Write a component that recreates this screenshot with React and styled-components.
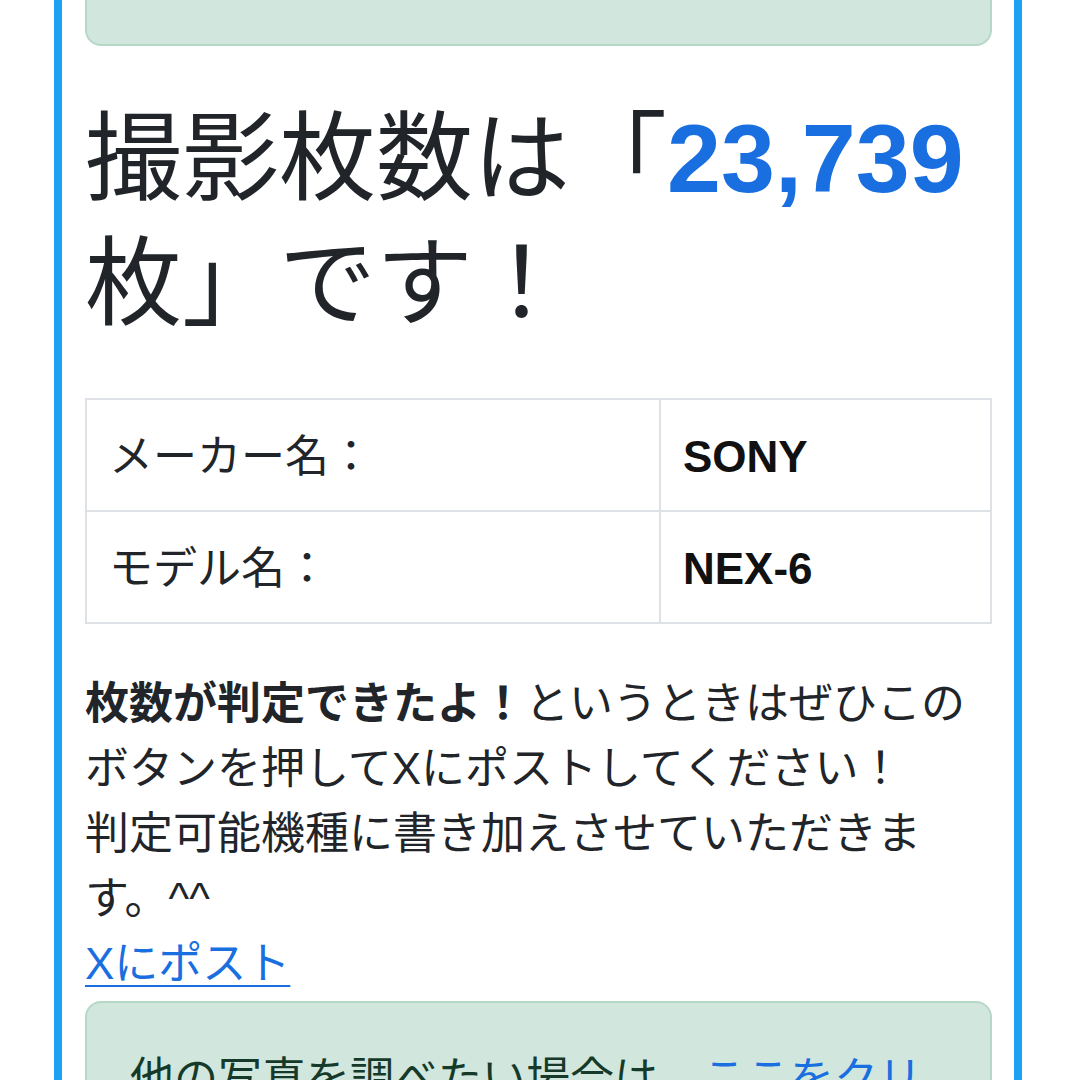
import React from "react";
import styled, { createGlobalStyle } from "styled-components";

const Global = createGlobalStyle`
  html, body {
    margin: 0;
    padding: 0;
    background: #ffffff;
  }
  body {
    font-family: "Liberation Sans", "Noto Sans CJK JP", sans-serif;
    color: #212529;
    overflow: hidden;
  }
`;

const Frame = styled.main`
  box-sizing: border-box;
  width: 968px;
  margin: -60px 0 0 54px;
  padding: 0 22px 40px 23px;
  border-left: 8px solid #1da1f2;
  border-right: 8px solid #1da1f2;
  background: #ffffff;
`;

const Alert = styled.div`
  box-sizing: border-box;
  min-height: ${(p) => (p.$height ? `${p.$height}px` : "auto")};
  margin-top: ${(p) => p.$gap || 0}px;
  padding: 43px 43px;
  background: #d1e7dd;
  border: 2px solid #b6d8c7;
  border-radius: 16px;
  color: #163a2a;
  font-size: 44px;
  line-height: 66px;
`;

const Heading = styled.h1`
  margin: 50px 0 52px;
  font-size: 97px;
  line-height: 125px;
  font-weight: 400;
  color: #212529;
`;

const Count = styled.span`
  font-weight: 700;
  color: #1a6fe0;
`;

const InfoTable = styled.table`
  width: 100%;
  border-collapse: collapse;
  table-layout: fixed;
`;

const Cell = styled.td`
  border: 2px solid #dee2e6;
  padding: 24px 22px 20px;
  font-size: 44px;
  line-height: 66px;
  font-weight: ${(p) => (p.$strong ? 700 : 400)};
  color: ${(p) => (p.$strong ? "#111111" : "#212529")};
  width: ${(p) => (p.$label ? "528px" : "auto")};
`;

const Note = styled.p`
  margin: 47px 0 0;
  font-size: 44px;
  line-height: 65px;
  color: #212529;
`;

const Strong = styled.strong`
  font-weight: 700;
`;

const Link = styled.a`
  color: #1a6fe0;
  text-decoration: underline;
  text-decoration-thickness: 2px;
  text-underline-offset: 6px;
`;

const rows = [
  { label: "メーカー名：", value: "SONY" },
  { label: "モデル名：", value: "NEX-6" },
];

export default function App() {
  return (
    <>
      <Global />
      <Frame>
        <Alert $height={106} />
        <Heading>
          撮影枚数は「<Count>23,739</Count>枚」です！
        </Heading>
        <InfoTable>
          <tbody>
            {rows.map((r) => (
              <tr key={r.label}>
                <Cell $label>{r.label}</Cell>
                <Cell $strong>{r.value}</Cell>
              </tr>
            ))}
          </tbody>
        </InfoTable>
        <Note>
          <Strong>枚数が判定できたよ！</Strong>というときはぜひこのボタンを押してXにポストしてください！
          <br />
          判定可能機種に書き加えさせていただきます。^^
          <br />
          <Link href="#">Xにポスト</Link>
        </Note>
        <Alert $gap={5}>
          他の写真を調べたい場合は、<Link href="#">ここをクリック</Link>してください。
        </Alert>
      </Frame>
    </>
  );
}
